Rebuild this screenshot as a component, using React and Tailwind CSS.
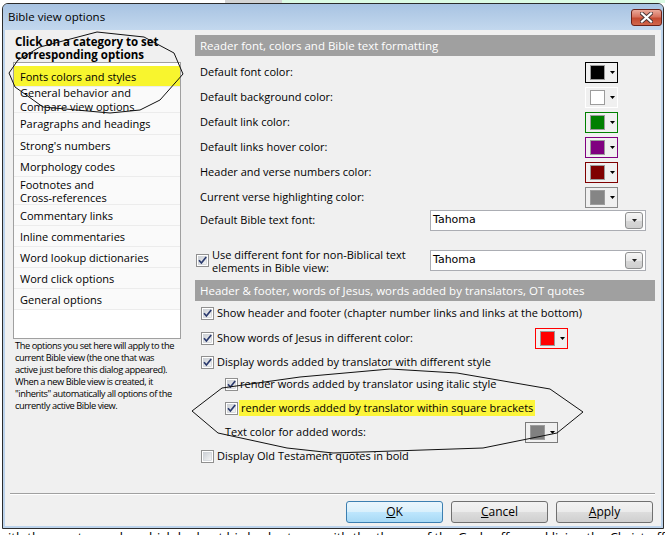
import { Fragment } from "react"

const categories = [
  { label: ["Fonts colors and styles"], h: "h-[21px]", active: true },
  { label: ["General behavior and", "Compare view options"], h: "h-[26px]", lead: "leading-[14px]" },
  { label: ["Paragraphs and headings"], h: "h-[22px]" },
  { label: ["Strong's numbers"], h: "h-[21px]" },
  { label: ["Morphology codes"], h: "h-[21px]" },
  { label: ["Footnotes and", "Cross-references"], h: "h-[28px]" },
  { label: ["Commentary links"], h: "h-[21px]" },
  { label: ["Inline commentaries"], h: "h-[21px]" },
  { label: ["Word lookup dictionaries"], h: "h-[21px]" },
  { label: ["Word click options"], h: "h-[21px]" },
  { label: ["General options"], h: "h-[21px]" },
]

const colorRows = [
  { label: "Default font color:", border: "border-black", swatch: "bg-black" },
  { label: "Default background color:", border: "border-white", swatch: "bg-white" },
  { label: "Default link color:", border: "border-[#008000]", swatch: "bg-[#008000]" },
  { label: "Default links hover color:", border: "border-[#800080]", swatch: "bg-[#800080]" },
  { label: "Header and verse numbers color:", border: "border-[#800000]", swatch: "bg-[#800000]" },
  { label: "Current verse highlighting color:", border: "border-[#8a8a8a]", swatch: "bg-[#858585]" },
]

function ColorButton({ border, swatch }) {
  return (
    <div className={`w-[33px] h-[21px] border ${border} flex items-center pl-[4px] gap-[5px]`}>
      <div className={`w-[15px] h-[15px] border border-[#9c9c9c] ${swatch}`} />
      <svg width="5" height="3" viewBox="0 0 5 3"><path d="M0 0h5L2.5 3z" fill="#000" /></svg>
    </div>
  )
}

function Combo({ value }) {
  return (
    <div className="w-[216px] h-[21px] border border-[#abadb3] bg-white flex items-center pl-[2px] pr-[2px]">
      <span className="flex-1 text-[11px] font-['DejaVu_Sans'] text-black">{value}</span>
      <div className="w-[18px] h-[17px] rounded-[3px] border border-[#8e8f8f] bg-[linear-gradient(to_bottom,#f6f6f6_0%,#e8e8e8_50%,#d8d8d8_51%,#cfcfcf_100%)] flex items-center justify-center">
        <svg width="5" height="3" viewBox="0 0 5 3"><path d="M0 0h5L2.5 3z" fill="#222" /></svg>
      </div>
    </div>
  )
}

function Check({ checked = true }) {
  return (
    <svg width="13" height="13" viewBox="0 0 13 13" className="shrink-0">
      <defs>
        <linearGradient id="cbg" x1="0" y1="0" x2="1" y2="1">
          <stop offset="0" stopColor="#cbcfd5" />
          <stop offset="1" stopColor="#f6f6f6" />
        </linearGradient>
      </defs>
      <rect x="0.5" y="0.5" width="12" height="12" fill="#fff" stroke="#8f8f8f" />
      <rect x="2.5" y="2.5" width="8" height="8" fill="url(#cbg)" stroke="#c4c8ce" strokeWidth="0.6" />
      {checked && (
        <path d="M3 6.3 L5.4 9 L10.2 3" fill="none" stroke="#2a3a6e" strokeWidth="1.7" />
      )}
    </svg>
  )
}

function DlgButton({ first, rest, primary }) {
  return (
    <button
      className={`w-[97px] h-[22px] rounded-[3px] border text-[12px] text-black flex items-center justify-center ${
        primary
          ? "border-[#3c7fb1] bg-[linear-gradient(to_bottom,#eaf6fd_0%,#d9f0fc_50%,#bee6fd_51%,#a7d9f5_100%)]"
          : "border-[#707070] bg-[linear-gradient(to_bottom,#f2f2f2_0%,#ebebeb_50%,#dddddd_51%,#cfcfcf_100%)]"
      }`}
    >
      <span className="underline">{first}</span>
      {rest}
    </button>
  )
}

export default function App() {
  return (
    <div className="relative w-[665px] h-[535px] overflow-hidden bg-white font-['Open_Sans'] text-[11px] text-black">
      <div className="flex h-[3px]">
        <div className="w-[225px] bg-white" />
        <div className="w-[57px] bg-[#d4d4d4]" />
        <div className="flex-1 bg-[#dcfbe4]" />
      </div>

      <div className="ml-[2px] w-[662px] h-[526px] border border-[#2c2c2c] rounded-t-[6px] bg-[#bcd3ec] flex flex-col">
        <div className="h-[26px] flex items-center justify-between pl-[5px] pr-[1px] rounded-t-[5px] bg-[linear-gradient(to_bottom,#a8c3e2,#c3d8ee)]">
          <span className="text-[11.5px] text-black">Bible view options</span>
          <div className="w-[31px] h-[17px] rounded-[3px] border border-[#6b2118] bg-[linear-gradient(to_bottom,#eaa99a_0%,#d8735f_45%,#c44a31_55%,#d2684c_100%)] flex items-center justify-center">
            <svg width="13" height="11" viewBox="0 0 13 11">
              <path d="M2 1.5 L11 9.5 M11 1.5 L2 9.5" stroke="#4a3535" strokeWidth="4" strokeLinecap="square" />
              <path d="M2 1.5 L11 9.5 M11 1.5 L2 9.5" stroke="#fff" strokeWidth="2.2" strokeLinecap="square" />
            </svg>
          </div>
        </div>

        <div className="flex-1 mx-[2px] mb-[2px] bg-[#f0f0f0] flex flex-col">
          <div className="flex-1 flex pt-[5px]">
            {/* categories */}
            <div className="ml-[8px] w-[168px]">
              <div className="pl-[2px] h-[27px] font-bold text-[11.5px] leading-[13px]">
                Click on a category to set
                <br />
                corresponding options
              </div>
              <div className="h-[277px] border border-[#a0a0a0] bg-white pt-[3px]">
                {categories.map((c, i) => (
                  <div
                    key={i}
                    className={`${c.h} ${c.lead || "leading-[13px]"} flex items-center px-[6px] border-b border-[#ececec] ${
                      c.active ? "bg-[#f8f52e]" : "bg-[#fafafa]"
                    }`}
                  >
                    <span>
                      {c.label.map((l, j) => (
                        <Fragment key={j}>
                          {j > 0 && <br />}
                          {l}
                        </Fragment>
                      ))}
                    </span>
                  </div>
                ))}
              </div>
              <div className="pl-[2px] pt-[1px] text-[9.3px] leading-[12px] tracking-[-0.45px] whitespace-nowrap">
                <div>The options you set here will apply to the</div>
                <div>current Bible view (the one that was</div>
                <div>active just before this dialog appeared).</div>
                <div>When a new Bible view is created, it</div>
                <div>"inherits" automatically all options of the</div>
                <div>currently active Bible view.</div>
              </div>
            </div>

            {/* options */}
            <div className="ml-[14px] w-[460px] flex flex-col">
              <div className="h-[21px] bg-[#a0a0a0] text-white text-[11.5px] flex items-center pl-[5px]">
                Reader font, colors and Bible text formatting
              </div>
              <div className="pt-[4px]">
                {colorRows.map(r => (
                  <div key={r.label} className="h-[25px] flex items-center justify-between pl-[5px] pr-[37px]">
                    <span>{r.label}</span>
                    <ColorButton border={r.border} swatch={r.swatch} />
                  </div>
                ))}
                <div className="h-[21px] flex items-center justify-between pl-[5px] pr-[9px]">
                  <span>Default Bible text font:</span>
                  <Combo value="Tahoma" />
                </div>
                <div className="mt-[15px] h-[29px] flex items-center justify-between pl-[1px] pr-[9px]">
                  <div className="flex items-center gap-[3px]">
                    <Check />
                    <span className="leading-[13px]">
                      Use different font for non-Biblical text
                      <br />
                      elements in Bible view:
                    </span>
                  </div>
                  <Combo value="Tahoma" />
                </div>
              </div>

              <div className="mt-[5px] h-[21px] bg-[#a0a0a0] text-white text-[11.5px] flex items-center pl-[5px]">
                Header &amp; footer, words of Jesus, words added by translators, OT quotes
              </div>
              <div className="h-[25px] flex items-center gap-[3px] pl-[6px]">
                <Check />
                <span>Show header and footer (chapter number links and links at the bottom)</span>
              </div>
              <div className="h-[25px] flex items-center pl-[6px] pr-[87px]">
                <Check />
                <span className="ml-[3px] flex-1">Show words of Jesus in different color:</span>
                <ColorButton border="border-[#ff0000]" swatch="bg-[#ff0000]" />
              </div>
              <div className="h-[22px] flex items-center gap-[3px] pl-[6px]">
                <Check />
                <span>Display words added by translator with different style</span>
              </div>
              <div className="h-[23px] flex items-center gap-[2px] pl-[30px]">
                <Check />
                <span>render words added by translator using italic style</span>
              </div>
              <div className="h-[24px] flex items-center pl-[30px]">
                <Check />
                <span className="ml-[1px] h-[16px] px-[2px] bg-[#fcf53a] flex items-center">
                  render words added by translator within square brackets
                </span>
              </div>
              <div className="h-[24px] flex items-center pl-[30px] pr-[97px]">
                <span className="flex-1">Text color for added words:</span>
                <ColorButton border="border-[#7a7a7a]" swatch="bg-[#808080]" />
              </div>
              <div className="h-[24px] flex items-center gap-[3px] pl-[6px]">
                <Check checked={false} />
                <span>Display Old Testament quotes in bold</span>
              </div>
            </div>
          </div>

          <div className="h-[33px] flex flex-col">
            <div className="ml-[5px] mr-[6px] h-[1px] bg-[#a0a0a0]" />
            <div className="ml-[5px] mr-[6px] h-[1px] bg-white" />
            <div className="mt-[6px] flex justify-end gap-[8px] pr-[8px]">
              <DlgButton first="O" rest="K" primary />
              <DlgButton first="C" rest="ancel" />
              <DlgButton first="A" rest="pply" />
            </div>
          </div>
        </div>
      </div>

      <div className="h-[6px] overflow-hidden pl-[8px] text-[13px] leading-[16px] whitespace-nowrap">
        ith the mentor under which he kept his body strong with the theory of the Gods offer and living the Christ off
      </div>

      <svg className="absolute inset-0 pointer-events-none" width="665" height="535">
        <polyline
          fill="none"
          stroke="#111"
          strokeWidth="1"
          points="40,47 97,32 144,37 174,53 183,74 160,100 140,110 110,113 43,107 15,87 9,73 18,60 40,47"
        />
        <polyline
          fill="none"
          stroke="#111"
          strokeWidth="1"
          points="192,411 222,388 300,377 390,369 457,373 550,389 583,412 557,433 483,448 333,453 287,448 218,433 192,411"
        />
      </svg>
    </div>
  )
}
